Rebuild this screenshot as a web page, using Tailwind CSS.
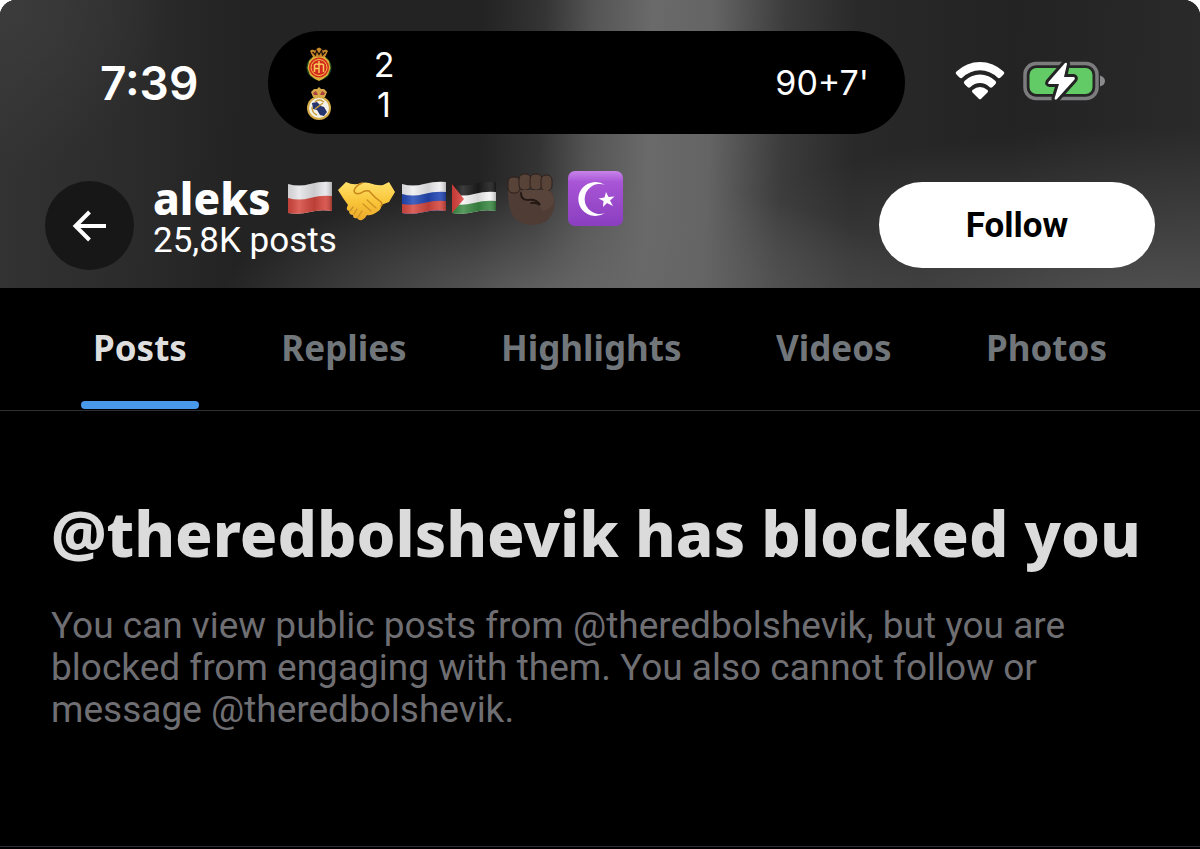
<!DOCTYPE html>
<html lang="en">
<head>
  <meta charset="UTF-8">
  <meta name="viewport" content="width=device-width, initial-scale=1.0">
  <title>aleks - Profile</title>
  <script src="https://cdn.jsdelivr.net/npm/@tailwindcss/browser@4"></script>
</head>
<body class="bg-white font-['Roboto',sans-serif]">
  <div class="min-h-screen flex flex-col bg-black rounded-t-2xl overflow-hidden">
    <header class="h-[288px] bg-[radial-gradient(ellipse_44%_66%_at_96%_110%,#545454,transparent),radial-gradient(ellipse_30%_46%_at_48%_108%,#686868,transparent),radial-gradient(ellipse_14%_60%_at_0%_0%,#3c3c3c,transparent),linear-gradient(92deg,#333333_0%,#2b2b2b_12%,#232323_20%,#232323_40%,#343434_45%,#545454_49%,#6a6a6a_54%,#646464_59%,#3c3c3c_65%,#292929_71%,#232323_84%,#2a2a2a_100%)]">
      <!-- Status bar -->
      <div class="flex items-center pt-[31px] pl-[100px] pr-[94px] font-['Inter',sans-serif] text-white">
        <div class="w-[168px] text-[46px] leading-none font-semibold">7:39</div>
        <div class="flex-1 h-[103px] rounded-full bg-black flex items-center justify-between px-9 text-[34px]">
          <div class="flex flex-col gap-1 pt-1">
            <div class="flex items-center gap-10">
              <svg class="w-7 h-9" viewBox="0 0 28 36" aria-label="Mallorca">
                <circle cx="15" cy="20.500" r="12.500" fill="#1d4a1d"/>
                <path d="M5 14l4-4h12l4 4 1.500 7-2.500 7-5 4-4 2-4-2-5-4-2.500-7z" fill="#dfae3a"/>
                <circle cx="15" cy="20.500" r="10" fill="#d42a1c"/>
                <circle cx="15" cy="20.500" r="8" fill="none" stroke="#f3c04a" stroke-width="1"/>
                <path d="M10.500 25v-7q2-2 4.500 0v8M15 18q2.500-2 4.500 0v7M10.500 21.500h4.500M15 14v4" fill="none" stroke="#f6c95a" stroke-width="1.500"/>
                <path d="M9 10L6 4l2-1.500 3 1 2-2 2-1 2 1 2 2 3-1L24 4l-3 6z" fill="#c88a2a"/>
                <path d="M8.500 5l3 3 1-4.500 2.500 4 2.500-4 1 4.500 3-3" fill="none" stroke="#20100a" stroke-width="1.300"/>
              </svg>
              <span class="w-6 text-center leading-9">2</span>
            </div>
            <div class="flex items-center gap-10">
              <svg class="w-7 h-9" viewBox="0 0 28 36" aria-label="Real Madrid">
                <path d="M9 10L7 5l3-3 3 0 2-2 2 2 3 0 3 3-2 5z" fill="#d8a84a"/>
                <path d="M9 6l3-2 2 4h-4zM21 6l-3-2-2 4h4z" fill="#a9403c"/>
                <circle cx="15" cy="21" r="12" fill="#d5ac48"/>
                <circle cx="15" cy="21" r="10" fill="#f3f1e8"/>
                <path d="M8 16l5-1 4 4 3 1 3 5-3 4-4-1-3-5-4-1z" fill="#27356f"/>
                <path d="M20 15q-5-4-9 0M8 20q0 6 5 8M11 22l8-6" fill="none" stroke="#c99e3c" stroke-width="1.500"/>
              </svg>
              <span class="w-6 text-center leading-9">1</span>
            </div>
          </div>
          <span>90+7'</span>
        </div>
        <svg class="w-[52px] h-10 ml-[49px] mb-1" viewBox="0 0 52 40" fill="#fff" aria-label="Wi-Fi">
          <path d="M2.500 10.500a34 34 0 0 1 47 0q1.500 1.500 0 3l-3 3q-1.500 1.500-3 0a25 25 0 0 0-35 0q-1.500 1.500-3 0l-3-3q-1.500-1.500 0-3z"/>
          <path d="M10.500 20a22 22 0 0 1 31 0q1.400 1.500 0 3l-3 3q-1.500 1.400-3 0a13.500 13.500 0 0 0-19 0q-1.500 1.400-3 0l-3-3q-1.400-1.500 0-3z"/>
          <path d="M18.500 29q7.500-6 15 0 1.200 1.200 0 2.400l-6.300 6.300q-1.200 1.200-2.400 0l-6.300-6.300q-1.200-1.200 0-2.400z"/>
        </svg>
        <svg class="w-[84px] h-10 ml-4 mb-1" viewBox="0 0 84 40" aria-label="Battery charging">
          <rect x="3" y="2.500" width="72" height="35" rx="11" fill="none" stroke="#7c7c7e" stroke-width="3.500"/>
          <rect x="7.500" y="7" width="63" height="26" rx="7" fill="#62cb65"/>
          <path d="M78 14.500q5 1.500 5 5.500t-5 5.500z" fill="#8a8a8c"/>
          <path d="M43 2L26.500 21q-1 2 1 2H37l-4.500 14.500q.500 2 2.500 .500L52.500 18.500q1-2-1-2.500H42l3-13q0-2-2-1z" fill="#fff" stroke="#242424" stroke-width="6" stroke-linejoin="round" paint-order="stroke"/>
        </svg>
      </div>

      <!-- Profile bar -->
      <div class="flex items-start pt-9 px-[45px] text-white">
        <button type="button" aria-label="Back" class="w-[89px] h-[89px] mt-[11px] shrink-0 rounded-full bg-[#171717] flex items-center justify-center">
          <svg class="w-9 h-8" viewBox="0 0 36 32" fill="none" stroke="#fff" stroke-width="4"><path d="M17.500 2L3.500 16l14 14M3.500 16H34"/></svg>
        </button>
        <div class="ml-[19px] flex-1">
          <div class="flex items-center h-14">
            <h1 class="mr-4 text-[44px] leading-[48px] font-extrabold font-['Noto_Sans',sans-serif]">aleks</h1>
            <svg class="w-[46px] h-9" viewBox="0 0 46 36" aria-label="Poland">
              <defs>
                <linearGradient id="fold"><stop stop-color="#000" stop-opacity=".1"/><stop offset=".25" stop-color="#fff" stop-opacity=".15"/><stop offset=".6" stop-color="#000" stop-opacity=".12"/><stop offset=".85" stop-color="#fff" stop-opacity=".1"/><stop offset="1" stop-color="#000" stop-opacity=".25"/></linearGradient>
              </defs>
              <path d="M1 4q11 3 22 0t22-2v29q-11-2-22 1t-22 1z" fill="#e6e6ea"/>
              <path d="M1 18q11 3 22 0t22-2v15q-11-2-22 1t-22 1z" fill="#d5483f"/>
              <path d="M1 4q11 3 22 0t22-2v29q-11-2-22 1t-22 1z" fill="url(#fold)"/>
            </svg>
            <svg class="w-[58px] h-11 ml-1 mt-2" viewBox="0 0 58 44" aria-label="Handshake">
              <defs>
                <linearGradient id="skin" x2="0" y2="1"><stop stop-color="#ffe06a"/><stop offset=".5" stop-color="#f9c63a"/><stop offset="1" stop-color="#eba92a"/></linearGradient>
              </defs>
              <path d="M1 10L9 2q8 4 15 1 4-1 8 0 9 3 14 2l6-3 6 10-6 10-8 3q1 4-4 7-6 4-10 3-2 4-5 5-3 1-5-2-4 1-4-3-4 0-4-4-4-1-1-6L6 18z" fill="url(#skin)"/>
              <path d="M25 3q-7 3-8 8 1 4 7 2 4-3 8-2 6 7 12 11 2 3 0 4" fill="none" stroke="#c8881c" stroke-width="1.500" stroke-linecap="round"/>
              <path d="M30 20l9 8M26 24l8 7M16 27l-3 4M20 29l-3 5M25 31l-4 6" fill="none" stroke="#d09222" stroke-width="1.300" stroke-linecap="round"/>
            </svg>
            <svg class="w-[46px] h-9 ml-[6px]" viewBox="0 0 46 36" aria-label="Russia">
              <path d="M1 4q11 3 22 0t22-2v29q-11-2-22 1t-22 1z" fill="#eeeef0"/>
              <path d="M1 14q11 3 22 0t22-2v19q-11-2-22 1t-22 1z" fill="#2348b5"/>
              <path d="M1 24q11 2 22-1t22-2v10q-11-2-22 1t-22 1z" fill="#d5483f"/>
              <path d="M1 4q11 3 22 0t22-2v29q-11-2-22 1t-22 1z" fill="url(#fold)"/>
            </svg>
            <svg class="w-[46px] h-9 ml-1" viewBox="0 0 46 36" aria-label="Palestine">
              <path d="M1 4q11 3 22 0t22-2v29q-11-2-22 1t-22 1z" fill="#1c1c1c"/>
              <path d="M1 14q11 3 22 0t22-2v19q-11-2-22 1t-22 1z" fill="#f4f4f4"/>
              <path d="M1 24q11 2 22-1t22-2v10q-11-2-22 1t-22 1z" fill="#3c8a45"/>
              <path d="M1 4l12 15L1 33z" fill="#d9403a"/>
              <path d="M1 4q11 3 22 0t22-2v29q-11-2-22 1t-22 1z" fill="url(#fold)"/>
            </svg>
            <svg class="w-[48px] h-[54px] ml-[10px] mt-1" viewBox="0 0 48 54" aria-label="Raised fist">
              <path d="M1 17h42q6 8 4 18-4 17-22 17Q10 52 4 39 1 31 1 17z" fill="#4f3c35"/>
              <g fill="#584339" stroke="#2c1f1a" stroke-width="1">
                <rect x="1" y="4" width="12" height="16" rx="5"/>
                <rect x="12" y="1" width="12" height="16" rx="5"/>
                <rect x="23" y="1" width="12" height="16" rx="5"/>
                <rect x="34" y="2" width="11" height="16" rx="5"/>
              </g>
              <path d="M14 21q0-5 6-4h20q7 2 7 12-3 8-12 9 0-8-12-9-8-1-9-8z" fill="#58443b"/>
              <path d="M14 20q0 7 7 7 9-1 12 5-4-3-9-2" fill="none" stroke="#241814" stroke-width="2" stroke-linecap="round"/>
            </svg>
            <svg class="w-[57px] h-[57px] ml-3" viewBox="0 0 57 57" aria-label="Star and crescent">
              <defs>
                <linearGradient id="tile" x2="0" y2="1"><stop stop-color="#c884ea"/><stop offset=".2" stop-color="#a855d6"/><stop offset="1" stop-color="#8a3fc0"/></linearGradient>
              </defs>
              <rect x="1" y="1" width="55" height="55" rx="7" fill="url(#tile)"/>
              <path d="M38 15A17 17 0 1 0 38 43A15 15 0 1 1 38 15z" fill="#fff"/>
              <path d="M39 22l2.500 5 6-.500-4.500 4 3 5.500-6-3-4 4 .500-6-5-2.500 6-1z" fill="#fff"/>
            </svg>
          </div>
          <p class="-mt-1 text-[35px] leading-[38px]">25,8K posts</p>
        </div>
        <button type="button" class="w-[276px] h-[86px] mt-3 pt-[2px] rounded-full bg-white text-black text-[35px] font-bold">Follow</button>
      </div>
    </header>

    <nav class="flex justify-between h-[123px] px-[81px] pb-px border-b border-[#2f3033] font-['Noto_Sans',sans-serif] text-[35px] font-bold text-[#71767b]">
      <a href="#posts" class="relative px-3 flex items-center text-[#dedede]">Posts<span class="absolute inset-x-0 bottom-0 h-2 rounded-full bg-[#4a99e9]"></span></a>
      <a href="#replies" class="px-3 flex items-center">Replies</a>
      <a href="#highlights" class="px-3 flex items-center">Highlights</a>
      <a href="#videos" class="px-3 flex items-center">Videos</a>
      <a href="#photos" class="px-3 flex items-center">Photos</a>
    </nav>

    <main id="posts" class="flex-1 px-[51px] pt-[84px]">
      <h2 class="text-[62px] leading-[76px] font-extrabold font-['Noto_Sans',sans-serif] text-[#dbdbdb]">@theredbolshevik has blocked you</h2>
      <p class="mt-[34px] text-[37px] leading-[42px] text-[#6f6f73]">You can view public posts from @theredbolshevik, but you are blocked from engaging with them. You also cannot follow or message @theredbolshevik.</p>
    </main>
    <div class="h-px mb-[2px] bg-[#2f2c33]"></div>
  </div>
</body>
</html>
